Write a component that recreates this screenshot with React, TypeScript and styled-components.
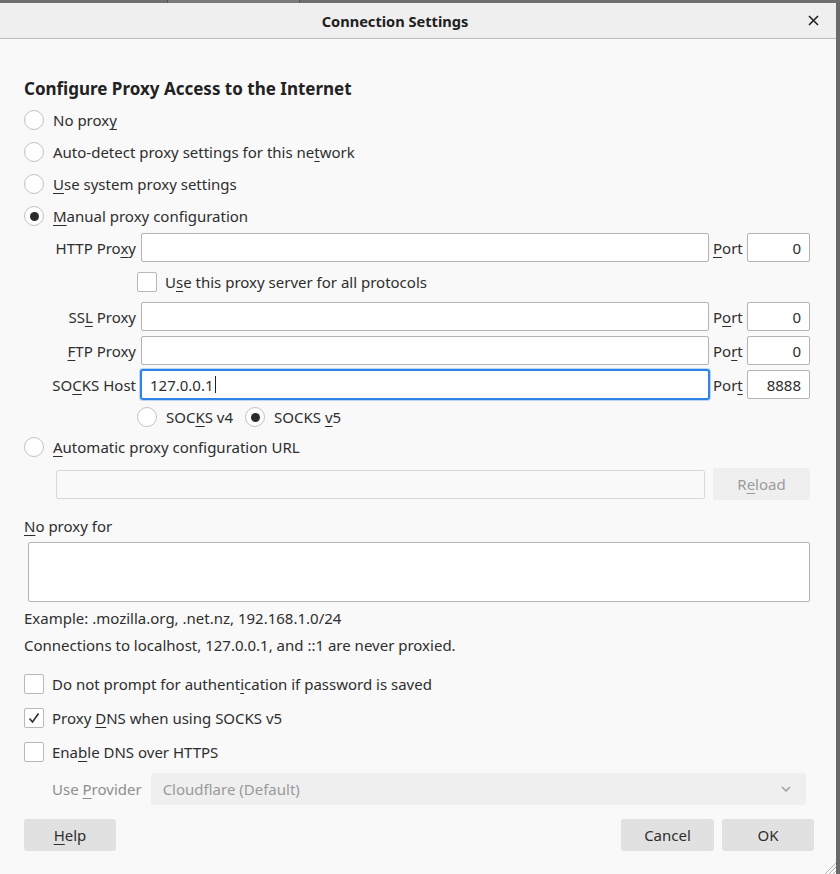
import React from 'react';
import styled, {createGlobalStyle} from 'styled-components';

const GlobalStyle = createGlobalStyle`
  html, body {
    margin: 0;
    padding: 0;
  }
  body {
    font-family: "Noto Sans", "DejaVu Sans", sans-serif;
    font-size: 15px;
    color: #2e2e2e;
  }
`;

const Page = styled.div`
  width: 840px;
  height: 874px;
  background: #6f6f6f;
  display: flex;
  flex-direction: column;
  overflow: hidden;
`;

const BackStrip = styled.div`
  height: 3px;
  flex: none;
  overflow: hidden;
  display: flex;
`;

const BackBox = styled.div`
  margin-left: 167px;
  width: 131px;
  height: 3px;
  border-left: 1px solid #555;
  border-right: 1px solid #555;
  background: #7a7a7a;
`;

const Main = styled.div`
  flex: 1;
  display: flex;
`;

const Dialog = styled.div`
  width: 836px;
  flex: none;
  background: #f9f9f9;
  display: flex;
  flex-direction: column;
  position: relative;
`;

const RightEdge = styled.div`
  flex: 1;
  background: #6a6a6a;
`;

const TitleBar = styled.div`
  height: 35px;
  flex: none;
  background: #efefef;
  border-bottom: 1px solid #bdbdbd;
  display: flex;
  align-items: center;
  justify-content: center;
  padding-right: 46px;
  position: relative;
`;

const Title = styled.div`
  font-weight: bold;
  font-size: 14.6px;
  color: #202020;
`;

const CloseButton = styled.div`
  position: absolute;
  right: 16px;
  top: 11px;
  width: 13px;
  height: 13px;
  display: flex;
`;

const Body = styled.div`
  padding: 0 26px 0 24px;
  display: flex;
  flex-direction: column;
`;

const Heading = styled.div`
  margin-top: 38px;
  height: 24px;
  line-height: 24px;
  font-size: 17px;
  font-weight: bold;
  color: #222;
`;

const OptionList = styled.div`
  margin-top: 3px;
  display: flex;
  flex-direction: column;
`;

const Row = styled.div<{ $h?: number; $gap?: number }>`
  height: ${p => p.$h ?? 32}px;
  display: flex;
  align-items: center;
  gap: ${p => p.$gap ?? 9}px;
`;

const RadioCircle = styled.span<{ $checked?: boolean }>`
  width: 18px;
  height: 18px;
  flex: none;
  border-radius: 50%;
  border: 1px solid #c2c2c2;
  background: #fff;
  display: flex;
  align-items: center;
  justify-content: center;

  &::after {
    content: '';
    display: ${p => (p.$checked ? 'block' : 'none')};
    width: 9px;
    height: 9px;
    border-radius: 50%;
    background: #2b2b2b;
  }
`;

const CheckBox = styled.span`
  width: 18px;
  height: 18px;
  flex: none;
  border-radius: 2px;
  border: 1px solid #b8b8b8;
  background: #fff;
  display: flex;
  align-items: center;
  justify-content: center;
`;

const Label = styled.span<{ $muted?: boolean }>`
  white-space: nowrap;
  color: ${p => (p.$muted ? '#8e8e8e' : '#2e2e2e')};
`;

const U = styled.span`
  text-decoration: underline;
  text-underline-offset: 3px;
  text-decoration-thickness: 1px;
`;

const ProxyGrid = styled.div`
  display: grid;
  grid-template-columns: 113px 1fr 30px 63px;
  grid-template-rows: 29px 30px 29px 29px 29px 26px;
  row-gap: 5px;
  column-gap: 4px;
  margin-top: 1px;
  margin-bottom: 1px;
  align-items: center;
`;

const FieldLabel = styled.span`
  text-align: right;
  padding-right: 1px;
  white-space: nowrap;
`;

const TextInput = styled.div<{ $focused?: boolean; $disabled?: boolean }>`
  height: 29px;
  box-sizing: border-box;
  border: 1px solid ${p => (p.$focused ? '#2f83e5' : p.$disabled ? '#d8d8d8' : '#b3b3b3')};
  box-shadow: ${p => (p.$focused ? '0 0 0 1px #2f83e5, 0 0 0 2px #b9d6f7' : 'none')};
  border-radius: 2px;
  background: ${p => (p.$disabled ? '#f9f9f9' : '#fff')};
  display: flex;
  align-items: center;
  padding: 0 8px;
`;

const Caret = styled.span`
  display: inline-block;
  width: 1px;
  height: 17px;
  background: #222;
  margin-left: 1px;
`;

const PortInput = styled(TextInput)`
  justify-content: flex-end;
`;

const PortLabel = styled.span`
  white-space: nowrap;
`;

const SpanRow = styled.div<{ $shift?: number }>`
  grid-column: 2 / 5;
  display: flex;
  align-items: center;
  margin-left: ${p => p.$shift ?? 0}px;
`;

const InlineOption = styled.div<{ $gap?: number }>`
  display: flex;
  align-items: center;
  gap: ${p => p.$gap ?? 9}px;
  margin-right: 12px;
`;

const UrlRow = styled.div`
  display: flex;
  align-items: center;
  gap: 8px;
  margin-top: 5px;
  margin-left: 32px;
  height: 32px;
`;

const Grow = styled.div`
  flex: 1;
`;

const Button = styled.div<{ $disabled?: boolean; $w?: number }>`
  width: ${p => p.$w ?? 92}px;
  height: 32px;
  flex: none;
  border-radius: 3px;
  background: ${p => (p.$disabled ? '#efefef' : '#e1e1e1')};
  color: ${p => (p.$disabled ? '#9b9b9b' : '#2e2e2e')};
  display: flex;
  align-items: center;
  justify-content: center;
`;

const SectionLabel = styled.div`
  margin-top: 16px;
  height: 20px;
  line-height: 20px;
`;

const TextArea = styled.div`
  margin: 6px 0 0 4px;
  height: 60px;
  box-sizing: border-box;
  border: 1px solid #b3b3b3;
  border-radius: 2px;
  background: #fff;
`;

const Note = styled.div`
  margin-top: 7px;
  height: 20px;
  line-height: 20px;
  white-space: nowrap;

  &:first-of-type {
    margin-top: 6px;
  }
`;

const Notes = styled.div`
  display: flex;
  flex-direction: column;
`;

const CheckList = styled.div`
  margin-top: 12px;
  display: flex;
  flex-direction: column;
`;

const ProviderRow = styled.div`
  margin-top: 4px;
  margin-left: 28px;
  margin-right: 4px;
  height: 32px;
  display: flex;
  align-items: center;
  gap: 9px;
`;

const Select = styled.div`
  flex: 1;
  height: 32px;
  border-radius: 3px;
  background: #efefef;
  color: #9a9a9a;
  display: flex;
  align-items: center;
  justify-content: space-between;
  padding: 0 15px 0 12px;
`;

const Footer = styled.div`
  margin-top: 14px;
  margin-right: -4px;
  display: flex;
  align-items: center;
  gap: 8px;
`;

const Grip = styled.div`
  position: absolute;
  right: 0;
  bottom: 0;
  width: 14px;
  height: 14px;
  display: flex;
`;

const Radio = ({checked, children}: { checked?: boolean; children: React.ReactNode }) => (
    <Row>
        <RadioCircle $checked={checked}/>
        <Label>{children}</Label>
    </Row>
);

const Check = ({checked, children}: { checked?: boolean; children: React.ReactNode }) => (
    <Row $h={34} $gap={8}>
        <CheckBox>
            {checked && (
                <svg width="14" height="14" viewBox="0 0 14 14">
                    <path d="M2.5 7.5 L5.5 11 L11.5 2.5" fill="none" stroke="#2b2b2b" strokeWidth="1.6"/>
                </svg>
            )}
        </CheckBox>
        <Label>{children}</Label>
    </Row>
);

export default function App() {
    return (
        <Page>
            <GlobalStyle/>
            <BackStrip>
                <BackBox/>
            </BackStrip>
            <Main>
                <Dialog>
                    <TitleBar>
                        <Title>Connection Settings</Title>
                        <CloseButton>
                            <svg width="13" height="13" viewBox="0 0 13 13">
                                <path d="M2 2 L11 11 M11 2 L2 11" stroke="#222" strokeWidth="1.6"/>
                            </svg>
                        </CloseButton>
                    </TitleBar>
                    <Body>
                        <Heading>Configure Proxy Access to the Internet</Heading>
                        <OptionList>
                            <Radio>No prox<U>y</U></Radio>
                            <Radio>Auto-detect proxy settings for this ne<U>t</U>work</Radio>
                            <Radio><U>U</U>se system proxy settings</Radio>
                            <Radio checked><U>M</U>anual proxy configuration</Radio>
                        </OptionList>

                        <ProxyGrid>
                            <FieldLabel>HTTP Pro<U>x</U>y</FieldLabel>
                            <TextInput/>
                            <PortLabel><U>P</U>ort</PortLabel>
                            <PortInput>0</PortInput>

                            <SpanRow $shift={-4}>
                                <InlineOption $gap={8}>
                                    <CheckBox/>
                                    <Label>U<U>s</U>e this proxy server for all protocols</Label>
                                </InlineOption>
                            </SpanRow>

                            <FieldLabel>SS<U>L</U> Proxy</FieldLabel>
                            <TextInput/>
                            <PortLabel>P<U>o</U>rt</PortLabel>
                            <PortInput>0</PortInput>

                            <FieldLabel><U>F</U>TP Proxy</FieldLabel>
                            <TextInput/>
                            <PortLabel>Po<U>r</U>t</PortLabel>
                            <PortInput>0</PortInput>

                            <FieldLabel>SO<U>C</U>KS Host</FieldLabel>
                            <TextInput $focused>127.0.0.1<Caret/></TextInput>
                            <PortLabel>Por<U>t</U></PortLabel>
                            <PortInput>8888</PortInput>

                            <SpanRow $shift={-4}>
                                <InlineOption>
                                    <RadioCircle/>
                                    <Label>SOC<U>K</U>S v4</Label>
                                </InlineOption>
                                <InlineOption>
                                    <RadioCircle $checked/>
                                    <Label>SOCKS <U>v</U>5</Label>
                                </InlineOption>
                            </SpanRow>
                        </ProxyGrid>

                        <Radio><U>A</U>utomatic proxy configuration URL</Radio>
                        <UrlRow>
                            <Grow><TextInput $disabled/></Grow>
                            <Button $disabled $w={97}>R<U>e</U>load</Button>
                        </UrlRow>

                        <SectionLabel><U>N</U>o proxy for</SectionLabel>
                        <TextArea/>
                        <Notes>
                            <Note>Example: .mozilla.org, .net.nz, 192.168.1.0/24</Note>
                            <Note>Connections to localhost, 127.0.0.1, and ::1 are never proxied.</Note>
                        </Notes>

                        <CheckList>
                            <Check>Do not prompt for authent<U>i</U>cation if password is saved</Check>
                            <Check checked>Proxy <U>D</U>NS when using SOCKS v5</Check>
                            <Check>Ena<U>b</U>le DNS over HTTPS</Check>
                        </CheckList>

                        <ProviderRow>
                            <Label $muted>Use <U>P</U>rovider</Label>
                            <Select>
                                <span>Cloudflare (Default)</span>
                                <svg width="10" height="6" viewBox="0 0 10 6">
                                    <path d="M1 1 L5 5 L9 1" fill="none" stroke="#a0a0a0" strokeWidth="1.5"/>
                                </svg>
                            </Select>
                        </ProviderRow>

                        <Footer>
                            <Button><U>H</U>elp</Button>
                            <Grow/>
                            <Button $w={93}>Cancel</Button>
                            <Button>OK</Button>
                        </Footer>
                    </Body>
                    <Grip>
                        <svg width="14" height="14" viewBox="0 0 14 14">
                            <path d="M14 3 L3 14 M14 7 L7 14 M14 11 L11 14" stroke="#b5b5b5" strokeWidth="1"/>
                        </svg>
                    </Grip>
                </Dialog>
                <RightEdge/>
            </Main>
        </Page>
    );
}
